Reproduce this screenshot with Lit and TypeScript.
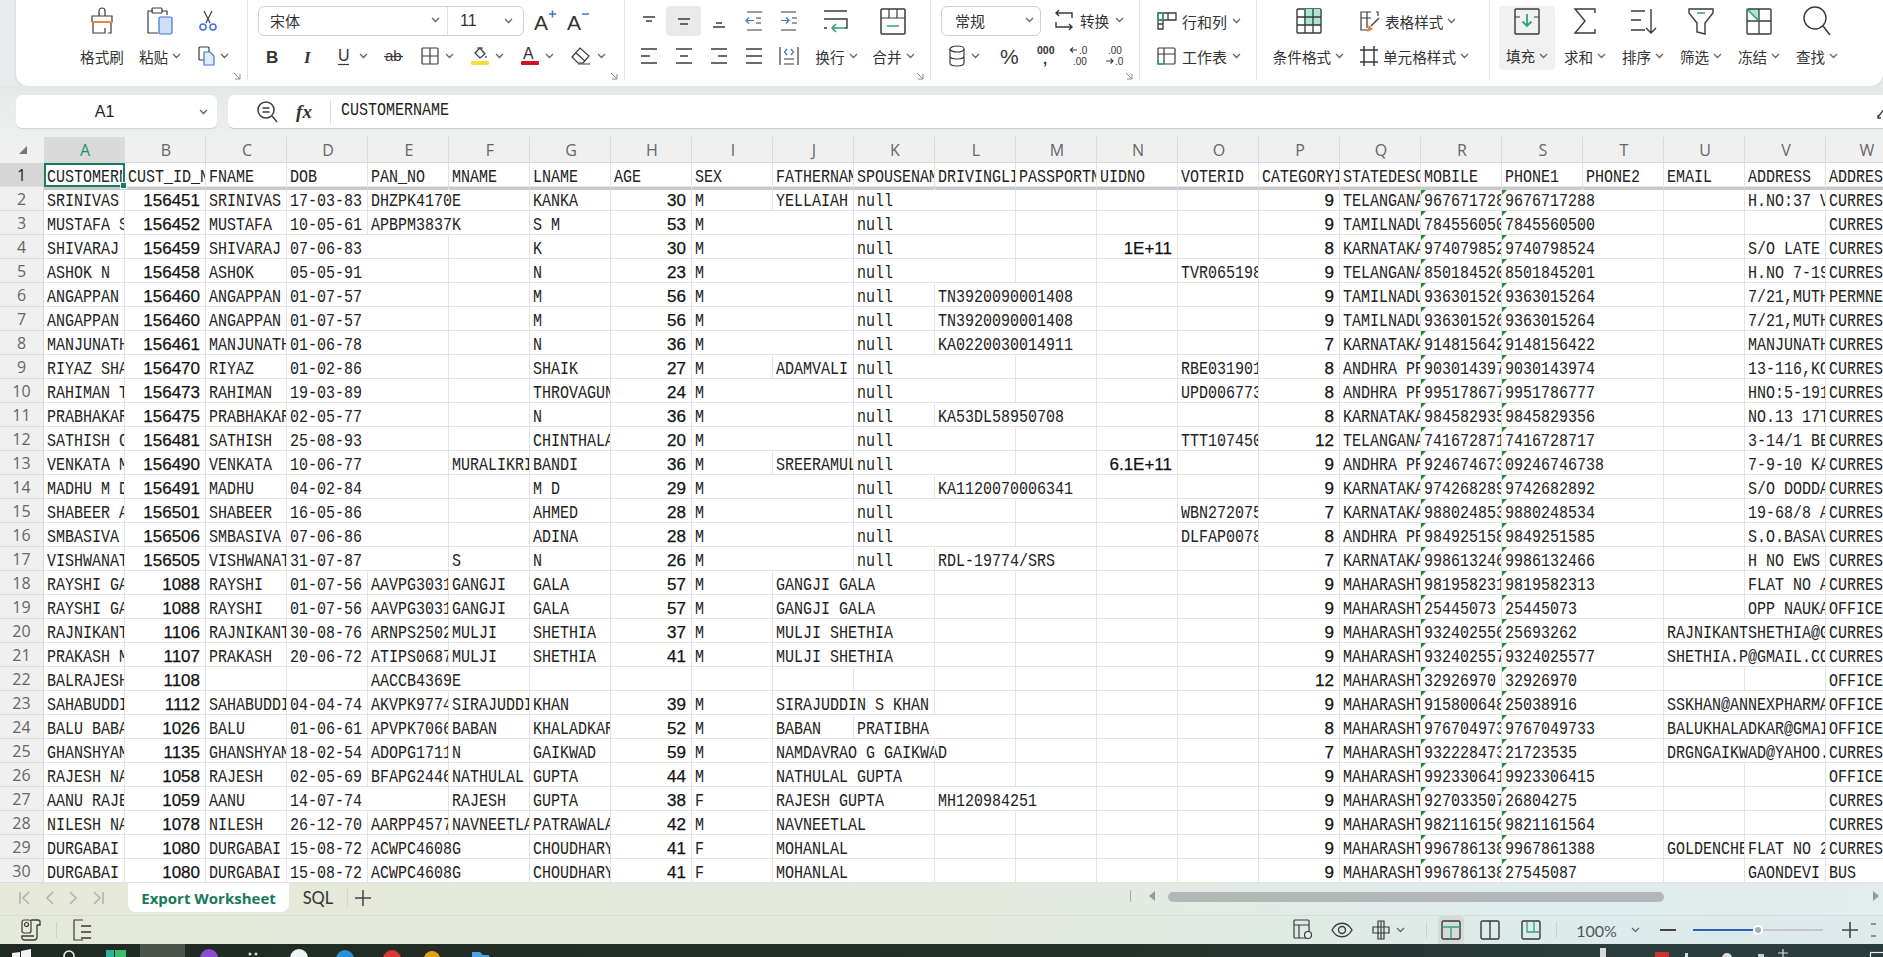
import { LitElement, html, css, svg } from "lit";
import { customElement } from "lit/decorators.js";

const M = "MAHARASHTRA";
const HEAD =
  "CUSTOMERNAME|CUST_ID_NO|FNAME|DOB|PAN_NO|MNAME|LNAME|AGE|SEX|FATHERNAME|SPOUSENAME|DRIVINGLICENSE|PASSPORTNO|UIDNO|VOTERID|CATEGORYID|STATEDESC|MOBILE|PHONE1|PHONE2|EMAIL|ADDRESS|ADDRESSTYPE";
const ROWS = [
  "SRINIVAS|156451|SRINIVAS|17-03-83|DHZPK4170E||KANKA|30|M|YELLAIAH|null|||||9|TELANGANA|9676717288|9676717288|||H.NO:37 VIJAY|CURRESPONDENCE",
  "MUSTAFA S M|156452|MUSTAFA|10-05-61|APBPM3837K||S M|53|M||null|||||9|TAMILNADU|7845560500|7845560500||||CURRESPONDENCE",
  "SHIVARAJ K|156459|SHIVARAJ|07-06-83|||K|30|M||null|||1E+11||8|KARNATAKA|9740798524|9740798524|||S/O LATE K|CURRESPONDENCE",
  "ASHOK N|156458|ASHOK|05-05-91|||N|23|M||null||||TVR0651988|9|TELANGANA|8501845201|8501845201|||H.NO 7-19|CURRESPONDENCE",
  "ANGAPPAN M|156460|ANGAPPAN|01-07-57|||M|56|M||null|TN3920090001408||||9|TAMILNADU|9363015264|9363015264|||7/21,MUTHU|PERMNENT",
  "ANGAPPAN M|156460|ANGAPPAN|01-07-57|||M|56|M||null|TN3920090001408||||9|TAMILNADU|9363015264|9363015264|||7/21,MUTHU|CURRESPONDENCE",
  "MANJUNATH N|156461|MANJUNATH|01-06-78|||N|36|M||null|KA0220030014911||||7|KARNATAKA|9148156422|9148156422|||MANJUNATH|CURRESPONDENCE",
  "RIYAZ SHAIK|156470|RIYAZ|01-02-86|||SHAIK|27|M|ADAMVALI|null||||RBE0319011|8|ANDHRA PRADESH|9030143974|9030143974|||13-116,KOTHA|CURRESPONDENCE",
  "RAHIMAN T|156473|RAHIMAN|19-03-89|||THROVAGUNTA|24|M||null||||UPD0067733|8|ANDHRA PRADESH|9951786777|9951786777|||HNO:5-1911|CURRESPONDENCE",
  "PRABHAKAR N|156475|PRABHAKAR|02-05-77|||N|36|M||null|KA53DL58950708||||8|KARNATAKA|9845829356|9845829356|||NO.13 17TH|CURRESPONDENCE",
  "SATHISH C|156481|SATHISH|25-08-93|||CHINTHALA|20|M||null||||TTT1074500|12|TELANGANA|7416728717|7416728717|||3-14/1 BESIDE|CURRESPONDENCE",
  "VENKATA M|156490|VENKATA|10-06-77||MURALIKRISHNA|BANDI|36|M|SREERAMULU|null|||6.1E+11||9|ANDHRA PRADESH|9246746738|09246746738|||7-9-10 KA|CURRESPONDENCE",
  "MADHU M D|156491|MADHU|04-02-84|||M D|29|M||null|KA1120070006341||||9|KARNATAKA|9742682892|9742682892|||S/O DODDA|CURRESPONDENCE",
  "SHABEER A|156501|SHABEER|16-05-86|||AHMED|28|M||null||||WBN2720755|7|KARNATAKA|9880248534|9880248534|||19-68/8 A|CURRESPONDENCE",
  "SMBASIVA|156506|SMBASIVA|07-06-86|||ADINA|28|M||null||||DLFAP00784|8|ANDHRA PRADESH|9849251585|9849251585|||S.O.BASAVA|CURRESPONDENCE",
  "VISHWANATH|156505|VISHWANATH|31-07-87||S|N|26|M||null|RDL-19774/SRS||||7|KARNATAKA|9986132466|9986132466|||H NO EWS|CURRESPONDENCE",
  `RAYSHI GALA|1088|RAYSHI|01-07-56|AAVPG3031|GANGJI|GALA|57|M|GANGJI GALA||||||9|${M}|9819582313|9819582313|||FLAT NO A|CURRESPONDENCE`,
  `RAYSHI GALA|1088|RAYSHI|01-07-56|AAVPG3031|GANGJI|GALA|57|M|GANGJI GALA||||||9|${M}|25445073|25445073|||OPP NAUKA|OFFICE`,
  `RAJNIKANT|1106|RAJNIKANT|30-08-76|ARNPS2502|MULJI|SHETHIA|37|M|MULJI SHETHIA||||||9|${M}|9324025560|25693262||RAJNIKANTSHETHIA@GMAIL||CURRESPONDENCE`,
  `PRAKASH M|1107|PRAKASH|20-06-72|ATIPS0687|MULJI|SHETHIA|41|M|MULJI SHETHIA||||||9|${M}|9324025577|9324025577||SHETHIA.P@GMAIL.COM||CURRESPONDENCE`,
  `BALRAJESH|1108|||AACCB4369E|||||||||||12|${M}|32926970|32926970||||OFFICE`,
  `SAHABUDDIN|1112|SAHABUDDIN|04-04-74|AKVPK9774|SIRAJUDDIN|KHAN|39|M|SIRAJUDDIN S KHAN||||||9|${M}|9158006488|25038916||SSKHAN@ANNEXPHARMA||OFFICE`,
  `BALU BABAN|1026|BALU|01-06-61|APVPK7066|BABAN|KHALADKAR|52|M|BABAN|PRATIBHA|||||8|${M}|9767049733|9767049733||BALUKHALADKAR@GMAIL||OFFICE`,
  `GHANSHYAM|1135|GHANSHYAM|18-02-54|ADOPG1711|N|GAIKWAD|59|M|NAMDAVRAO G GAIKWAD||||||7|${M}|9322284733|21723535||DRGNGAIKWAD@YAHOO.CO||CURRESPONDENCE`,
  `RAJESH NA|1058|RAJESH|02-05-69|BFAPG2446|NATHULAL|GUPTA|44|M|NATHULAL GUPTA||||||9|${M}|9923306415|9923306415||||OFFICE`,
  `AANU RAJE|1059|AANU|14-07-74||RAJESH|GUPTA|38|F|RAJESH GUPTA||MH120984251||||9|${M}|9270335072|26804275||||CURRESPONDENCE`,
  `NILESH NA|1078|NILESH|26-12-70|AARPP4577|NAVNEETLAL|PATRAWALA|42|M|NAVNEETLAL||||||9|${M}|9821161564|9821161564||||CURRESPONDENCE`,
  `DURGABAI|1080|DURGABAI|15-08-72|ACWPC4608G||CHOUDHARY|41|F|MOHANLAL||||||9|${M}|9967861388|9967861388||GOLDENCHEM|FLAT NO 2|CURRESPONDENCE`,
  `DURGABAI|1080|DURGABAI|15-08-72|ACWPC4608G||CHOUDHARY|41|F|MOHANLAL||||||9|${M}|9967861388|27545087|||GAONDEVI|BUS`,
];
const COLS = "ABCDEFGHIJKLMNOPQRSTUVW".split("");
const NUM_COLS = [1, 7, 13, 15];
const COL_W = 81;

const ic = (w: number, h: number, body: unknown) =>
  html`<svg width=${w} height=${h} viewBox="0 0 ${w} ${h}">${body}</svg>`;

const BLUE = "#3f74d6";
const GREEN = "#2ea37c";

const chev = html`<svg class="chev" width="9" height="6" viewBox="0 0 9 6"><path d="M1 1l3.5 3.5L8 1" /></svg>`;
const launcher = html`<svg class="launch" width="8" height="8" viewBox="0 0 8 8"><path d="M1 1l5.5 5.5M7 2v5H2" /></svg>`;

const I = {
  painter: ic(28, 28, svg`<path d="M11 9V4a3 3 0 0 1 6 0v5"/><path d="M4 9h20v6H4z"/><path d="M4 15h20" stroke="#e8873a" stroke-width="2"/><path d="M5 16v10h12v-5M20 26h3V16"/>`),
  paste: ic(30, 30, svg`<path d="M8 5H3v22h10M17 5h5v4"/><rect x="7" y="2" width="10" height="5" rx="1"/><rect x="14" y="11" width="13" height="17" rx="1.5" fill="#cfdffa" stroke="${BLUE}"/>`),
  cut: ic(20, 22, svg`<path d="M8 13L14 1M12 13L6 1"/><circle cx="5" cy="17" r="3" stroke="${BLUE}" stroke-width="1.6"/><circle cx="15" cy="17" r="3" stroke="${BLUE}" stroke-width="1.6"/>`),
  copy: ic(18, 20, svg`<rect x="1" y="1" width="10" height="13" rx="1"/><path d="M6 6h6l4 4v9H6z" fill="#e3edff" stroke="${BLUE}"/>`),
  aUp: ic(24, 24, svg`<text x="1" y="21" font-size="21" class="g">A</text><path d="M16 5h7M19.500 1.500v7" stroke="${BLUE}" stroke-width="1.500"/>`),
  aDn: ic(24, 24, svg`<text x="1" y="21" font-size="21" class="g">A</text><path d="M16 5h7" stroke="${BLUE}" stroke-width="1.500"/>`),
  b: ic(20, 20, svg`<text x="4" y="17" font-size="17" font-weight="700" class="g">B</text>`),
  i: ic(20, 20, svg`<text x="6" y="17" font-size="17" font-style="italic" font-weight="700" class="g serif">I</text>`),
  u: ic(20, 20, svg`<text x="4" y="15" font-size="16" class="g">U</text><path d="M4 18.500h11"/>`),
  ab: ic(20, 20, svg`<text x="1" y="15" font-size="15" class="g">ab</text><path d="M0 10.500h19"/>`),
  border: ic(20, 20, svg`<rect x="2" y="2" width="16" height="16" rx="1"/><path d="M2 10h16M10 2v16"/>`),
  fill: ic(20, 22, svg`<path d="M5 8l5-5 5 6-5 4z"/><path d="M7 3h6M16 11v2"/><rect x="1" y="16" width="18" height="4" rx="1" fill="#f3e03a" stroke="none"/>`),
  color: ic(20, 22, svg`<text x="3" y="14" font-size="16" class="g">A</text><rect x="1" y="16" width="18" height="4" rx="1" fill="#d6121f" stroke="none"/>`),
  eraser: ic(22, 20, svg`<path d="M2 11l8-9 9 8-6 7H8z"/><path d="M6 7l9 8M8 18h12"/>`),
  vTop: ic(20, 20, svg`<path d="M4 6h12M7 10h6" stroke-width="1.500"/>`),
  vMid: ic(20, 20, svg`<path d="M4 8h12M6 13h8" stroke-width="1.500"/>`),
  vBot: ic(20, 20, svg`<path d="M7 12h6M4 16h12" stroke-width="1.500"/>`),
  outdent: ic(20, 22, svg`<path d="M3 2h15M3 20h15M12 8h5M12 13h5"/><path d="M10 10.500H2M5 7.500l-3 3 3 3" stroke="${BLUE}"/>`),
  indent: ic(20, 22, svg`<path d="M2 2h15M2 20h15M13 8h5M13 13h5"/><path d="M2 10.500h8M7 7.500l3 3-3 3" stroke="${BLUE}"/>`),
  hLeft: ic(20, 20, svg`<path d="M2 3h16M2 10h9M2 17h16" stroke-width="1.400"/>`),
  hMid: ic(20, 20, svg`<path d="M2 3h16M6 10h8M2 17h16" stroke-width="1.400"/>`),
  hRight: ic(20, 20, svg`<path d="M2 3h16M9 10h9M2 17h16" stroke-width="1.400"/>`),
  hJust: ic(20, 20, svg`<path d="M2 3h16M2 10h16M2 17h16" stroke-width="1.400"/>`),
  hDist: ic(22, 22, svg`<path d="M2 2v18M20 2v18M6 14h10M6 19h10"/><path d="M9 4L6.500 7 9 10M13 4l2.500 3L13 10" stroke="${BLUE}"/>`),
  wrap: ic(28, 28, svg`<path d="M2 4h23M2 12h23v9h-2M2 21h3" stroke-width="1.400"/><path d="M24 21H10M14 17l-4 4 4 4" stroke="${GREEN}" stroke-width="1.500"/>`),
  merge: ic(28, 28, svg`<rect x="2" y="2" width="24" height="25" rx="1" stroke-width="1.500"/><path d="M2 11h24M10 2v9M18 2v9"/><path d="M8 19h12" stroke="${GREEN}" stroke-width="1.500"/>`),
  convert: ic(20, 22, svg`<path d="M5 1L2 4l3 3M2 4h16v5M15 21l3-3-3-3M18 18H2v-5" stroke-width="1.400"/>`),
  db: ic(20, 22, svg`<ellipse cx="10" cy="4" rx="7" ry="3"/><path d="M3 4v14c0 4 14 4 14 0V4M3 11c0 4 14 4 14 0"/>`),
  pct: ic(24, 24, svg`<text x="1" y="20" font-size="21" class="g">%</text>`),
  thou: ic(24, 24, svg`<text x="3" y="10" font-size="10.500" font-weight="700" class="g">000</text><text x="9" y="20" font-size="15" font-weight="700" class="g">,</text>`),
  decUp: ic(24, 24, svg`<path d="M8 6H2M4 3.500L1.500 6 4 8.500"/><text x="10" y="10" font-size="10" class="g">.0</text><text x="4" y="21" font-size="10" class="g">.00</text>`),
  decDn: ic(24, 24, svg`<text x="4" y="10" font-size="10" class="g">.00</text><path d="M2 17h7M6.500 14.500L9 17l-2.500 2.500"/><text x="11" y="21" font-size="10" class="g">.0</text>`),
  rowcol: ic(20, 20, svg`<path d="M6 2h13v7H6zM6 9H1v9h5zM1 2h5v7H1zM11 2v7M1 13h5" stroke-width="1.300"/><path d="M1 2h5v7H1z" stroke="${GREEN}"/>`),
  sheet: ic(20, 20, svg`<rect x="1" y="2" width="17" height="16" rx="1"/><path d="M1 8h17M7 2v16"/><path d="M1 14v4h6" stroke="${GREEN}" stroke-width="1.600"/>`),
  cond: ic(28, 30, svg`<rect x="2" y="3" width="24" height="24" rx="1" stroke-width="1.400"/><rect x="9" y="3" width="16" height="17" fill="#a9e6d0" stroke="none"/><path d="M2 11h24M2 19h24M10 3v24M18 3v24" stroke-width="1.300"/>`),
  tableStyle: ic(22, 22, svg`<path d="M12 2H2v18h7M2 8h10M8 2v16M17 2h2v4"/><path d="M20 8l-8 8" stroke="#444" stroke-width="1.500"/><path d="M10 16l3 3-4 2z" fill="#e8873a" stroke="#e8873a"/>`),
  cellStyle: ic(20, 22, svg`<path d="M1 5h18M1 17h18M5 1v20M15 1v20" stroke-width="1.500"/>`),
  fillDown: ic(28, 30, svg`<rect x="2" y="3" width="24" height="25" rx="1" stroke-width="1.400"/><path d="M2 11h5M21 11h5"/><path d="M14 8v12M9.500 15.500L14 20l4.500-4.500" stroke="${GREEN}" stroke-width="1.800"/>`),
  sum: ic(28, 30, svg`<path d="M24 7V3H4l10 12L4 27h20v-4" stroke-width="1.400"/>`),
  sort: ic(28, 30, svg`<path d="M2 5h14M2 14h10M2 24h14M22 3v24M17 22l5 5 5-5" stroke-width="1.400"/>`),
  filter: ic(28, 30, svg`<path d="M2 3h24v4l-8 10v11l-8-2V17L2 7z" stroke-width="1.400"/><path d="M10 7h8" stroke="${GREEN}" stroke-width="1.500"/>`),
  freeze: ic(28, 30, svg`<path d="M2 3h12v14z" fill="#a9e6d0" stroke="none"/><rect x="2" y="3" width="24" height="25" rx="1" stroke-width="1.400"/><path d="M14 3v25M2 15h24" stroke-width="1.300"/><path d="M2 3l12 12" stroke="${GREEN}" stroke-width="1.500"/>`),
  find: ic(30, 32, svg`<circle cx="13" cy="13" r="11" stroke-width="1.400"/><path d="M21 21l7 9" stroke-width="1.500"/>`),
  zoomFx: ic(22, 24, svg`<circle cx="10" cy="10" r="8" stroke-width="1.500"/><path d="M6.500 8h7M6.500 12h7M16 16l5 6" stroke-width="1.400"/>`),
  macro: ic(22, 24, svg`<rect x="2" y="2" width="9" height="13" rx="2"/><circle cx="6.500" cy="6.500" r="2"/><path d="M11 2h7a2 2 0 0 1 2 2v3h-3M17 7v12a3 3 0 0 1-3 3H4a3 3 0 0 1-2-4h12" stroke-width="1.300"/>`),
  outline: ic(22, 24, svg`<path d="M12 2H3v20h9"/><path d="M10 8h10M10 14h10M10 20h10" stroke-width="1.500"/>`),
  pageSet: ic(20, 22, svg`<rect x="1" y="1" width="15" height="18" rx="1"/><path d="M1 6h15M6 6v13"/><circle cx="15" cy="16" r="3.500" fill="#e6ecea"/>`),
  eye: ic(24, 18, svg`<path d="M2 9c5-9 15-9 20 0-5 9-15 9-20 0z" stroke-width="1.400"/><circle cx="12" cy="9" r="3.500" stroke-width="1.400"/>`),
  crossView: ic(20, 22, svg`<path d="M7 2h6v6h5v6h-5v6H7v-6H2V8h5z"/><path d="M7 8h6v6H7zM10 2v18"/>`),
  viewNormal: ic(20, 22, svg`<rect x="1" y="2" width="18" height="18" rx="1.500" stroke-width="1.400"/><path d="M1 8h18M10 8v12" stroke="${GREEN}" stroke-width="1.400"/>`),
  viewPage: ic(20, 22, svg`<rect x="1" y="2" width="18" height="18" rx="1.500" stroke-width="1.400"/><path d="M10 2v18" stroke-width="1.400"/>`),
  viewBreak: ic(20, 22, svg`<rect x="1" y="2" width="18" height="18" rx="1.500" stroke-width="1.400"/><path d="M6 3v10h13M13 3v10" stroke="${GREEN}" stroke-width="1.300"/>`),
  expand: ic(9, 16, svg`<path d="M1 13l7-9M4 14H1v-3M6 2h3" stroke-width="1.300"/>`),
};

@customElement("app-root")
export class AppRoot extends LitElement {
  static styles = css`
    :host {
      display: block;
      width: 1883px;
      height: 957px;
      overflow: hidden;
      font-family: "Noto Sans CJK SC", "Noto Sans", sans-serif;
      color: #333;
      background: #e8ecec;
    }

    svg {
      display: block;
      flex: none;
      fill: none;
      stroke: #3a3a3a;
      stroke-width: 1.2;
    }
    svg .g {
      fill: #333;
      stroke: none;
      font-family: "Liberation Sans", sans-serif;
    }
    svg .serif {
      font-family: "Liberation Serif", serif;
    }
    .chev {
      stroke: #666;
      stroke-width: 1.3;
    }
    .launch {
      position: absolute;
      right: 6px;
      bottom: 0;
      stroke: #888;
      stroke-width: 1;
    }

    /* ribbon */
    .ribbon {
      display: flex;
      height: 86px;
      margin-left: 16px;
      background: #fff;
      border-radius: 0 0 12px 12px;
      box-shadow: 0 1px 3px rgba(0, 0, 0, 0.12);
      font-size: 14.6px;
      white-space: nowrap;
    }
    .group {
      position: relative;
      flex: none;
      box-sizing: border-box;
      height: 80px;
      padding-top: 6px;
      border-right: 1px solid #e2e2e2;
    }
    .grid {
      display: grid;
      grid-auto-flow: column;
      grid-template-rows: 30px 30px;
      row-gap: 5px;
      justify-content: start;
    }
    .grid > * {
      display: flex;
      align-items: center;
      justify-content: center;
      gap: 4px;
    }
    .big {
      grid-row: span 2;
      flex-direction: column;
      gap: 5px !important;
      border-radius: 4px;
    }
    .big > * {
      height: 30px;
      display: flex;
      align-items: center;
      gap: 4px;
    }
    .lead {
      justify-content: flex-start !important;
    }
    .on {
      background: #e9e9e9;
      border-radius: 4px;
    }
    .big.on {
      background: #f1f1f1;
      height: 64px;
      margin: 0 1px;
    }
    .stack {
      display: flex;
      flex-direction: column;
      gap: 5px;
    }
    .line {
      display: flex;
      align-items: center;
      height: 30px;
    }
    .t {
      display: flex;
      align-items: center;
      gap: 5px;
    }

    .g1 {
      width: 232px;
    }
    .g1 .grid {
      grid-template-columns: 58px 58px 48px;
      padding-left: 57px;
    }
    .g1 .lead {
      padding-left: 9px;
    }
    .g2 {
      width: 377px;
    }
    .g2 .top {
      padding-left: 10px;
      gap: 9px;
    }
    .g2 .bottom {
      padding-left: 14px;
      gap: 16px;
    }
    .fontbox {
      display: flex;
      align-items: center;
      box-sizing: border-box;
      width: 266px;
      height: 30px;
      border: 1px solid #d0d0d0;
      border-radius: 6px;
      font-size: 15px;
    }
    .fontname {
      display: flex;
      align-items: center;
      justify-content: space-between;
      box-sizing: border-box;
      width: 189px;
      height: 100%;
      padding: 0 7px 2px 11px;
      border-right: 1px solid #e0e0e0;
    }
    .fontsize {
      display: flex;
      align-items: center;
      justify-content: space-between;
      flex: 1;
      padding: 0 10px 0 12px;
      font-family: "Liberation Sans", sans-serif;
      font-size: 16px;
    }
    .g3 {
      width: 306px;
    }
    .g3 .grid {
      grid-template-columns: repeat(5, 35.2px) 59px 55px;
      padding-left: 6px;
    }
    .g4 {
      width: 209px;
    }
    .g4 .top {
      padding-left: 10px;
      gap: 13px;
    }
    .g4 .bottom {
      padding-left: 16px;
      gap: 11px;
    }
    .numfmt {
      display: flex;
      align-items: center;
      justify-content: space-between;
      box-sizing: border-box;
      width: 100px;
      height: 30px;
      padding: 0 6px 2px 13px;
      border: 1px solid #d0d0d0;
      border-radius: 6px;
      font-size: 15px;
    }
    .g4 .conv {
      gap: 6px;
      padding-bottom: 2px;
    }
    .g4 .db {
      margin-right: 8px;
      gap: 4px;
    }
    .g5 {
      width: 117px;
    }
    .g5 .stack {
      padding-left: 17px;
      font-size: 15px;
    }
    .g5 .t {
      gap: 5px;
    }
    .g6 {
      width: 233px;
    }
    .g6 .grid {
      grid-template-columns: 83px 130px;
      column-gap: 9px;
      padding-left: 10px;
    }
    .g6 .lead {
      gap: 4px;
    }
    .g7 {
      width: 390px;
      border-right: none;
    }
    .g7 .grid {
      grid-template-columns: repeat(6, 58px);
      padding-left: 8px;
    }

    /* formula bar */
    .formula {
      display: flex;
      gap: 11px;
      height: 33px;
      padding: 9px 0 9px 16px;
      background: linear-gradient(#e4e9e8, #eef0f0);
    }
    .namebox {
      display: flex;
      align-items: center;
      box-sizing: border-box;
      width: 201px;
      padding: 0 9px 0 0;
      background: #fff;
      border-radius: 6px;
      font-family: "Liberation Sans", sans-serif;
      font-size: 16px;
      box-shadow: 0 1px 1px rgba(0, 0, 0, 0.12);
    }
    .namebox span {
      flex: 1;
      text-align: center;
      margin-right: 6px;
      color: #222;
    }
    .fbox {
      display: flex;
      align-items: center;
      flex: 1;
      background: #fff;
      border-radius: 6px 0 0 6px;
      box-shadow: 0 1px 1px rgba(0, 0, 0, 0.16);
    }
    .fbox .zoom {
      margin-left: 28px;
    }
    .fx {
      width: 52px;
      text-align: center;
      font: italic 700 19px "Liberation Serif", serif;
      color: #333;
    }
    .fbox .val {
      height: 24px;
      padding-left: 10px;
      border-left: 1px solid #ddd;
      line-height: 17px;
      flex: 1;
    }
    .fbox .more {
      margin-right: -3px;
    }

    /* sheet */
    .sheet {
      display: grid;
      grid-template-columns: 44px repeat(23, 81px);
      grid-template-rows: 26px repeat(30, 24px);
      height: 746px;
      overflow: hidden;
      background: #fff;
    }
    .corner,
    .ch,
    .rh {
      display: flex;
      align-items: center;
      justify-content: center;
      box-sizing: border-box;
      background: #f0f0f0;
      color: #666;
      font-family: "Open Sans", sans-serif;
      font-size: 16px;
    }
    .corner {
      padding-left: 2px;
    }
    .corner svg {
      fill: #777;
      stroke: none;
    }
    .ch {
      padding-left: 2px;
      border-right: 1px solid #dcdcdc;
      border-bottom: 1px solid #d8d8d8;
    }
    .ch.active {
      background: #dadada;
      color: #1a8f66;
    }
    .rh {
      border-bottom: 1px solid #dcdcdc;
      border-right: 1px solid #d8d8d8;
    }
    .rh.active {
      background: #d6d6d6;
      color: #222;
    }
    .c {
      position: relative;
      box-sizing: border-box;
      height: 24px;
      overflow: hidden;
      padding-left: 3px;
      border-right: 1px solid #e3e3e3;
      border-bottom: 1px solid #e3e3e3;
      line-height: 24px;
      white-space: pre;
    }
    .c.spill {
      overflow: visible;
      border-right-color: transparent;
    }
    .c.frozen {
      border-top: 3px solid #c9c9c9;
      line-height: 18px;
    }
    .c.num {
      padding: 0 5px 0 0;
      text-align: right;
      font: 17px/27px "Liberation Sans", sans-serif;
      color: #111;
      -webkit-text-stroke: 0.25px #111;
    }
    .c.frozen.num {
      line-height: 21px;
    }
    .c.flag::before {
      content: "";
      position: absolute;
      left: 0;
      top: 0;
      border-top: 5px solid #1f8f33;
      border-right: 5px solid transparent;
    }
    .c.sel {
      overflow: visible;
      outline: 2px solid #12805c;
      outline-offset: -2px;
      z-index: 2;
      clip-path: inset(0 -3px -3px 0);
    }
    .clip {
      display: block;
      overflow: hidden;
    }
    .sel .clip {
      width: 75px;
    }
    .c.sel::after {
      content: "";
      position: absolute;
      right: -3px;
      bottom: -3px;
      width: 5px;
      height: 5px;
      background: #12805c;
      border: 1px solid #fff;
    }
    .tx {
      display: inline-block;
      font: 18px "Liberation Mono", "Noto Sans CJK SC", monospace;
      line-height: inherit;
      color: #222;
      transform: scaleX(0.833);
      transform-origin: left center;
    }

    /* sheet tabs */
    .tabs {
      display: flex;
      height: 32px;
      background: linear-gradient(90deg, #e6e9d9 0%, #e4e9dc 50%, #dfeced 80%, #e1ecec 100%);
      font-size: 16px;
    }
    .nav {
      display: flex;
      box-sizing: border-box;
      align-items: center;
      width: 128px;
      height: 29px;
      padding-left: 18px;
      gap: 15px;
    }
    .nav svg {
      stroke: #b3b3b3;
      stroke-width: 1.6;
    }
    .tab {
      display: flex;
      align-items: center;
      justify-content: center;
      height: 29px;
      font-family: "Open Sans", sans-serif;
    }
    .tab.cur {
      width: 161px;
      background: #fff;
      border-radius: 0 0 8px 8px;
      color: #197a58;
      font-weight: 700;
      font-size: 15px;
    }
    .tab.sql {
      width: 58px;
      color: #333;
      font-family: "Lato", sans-serif;
      font-size: 16.5px;
    }
    .tabsep {
      width: 1px;
      height: 20px;
      margin-top: 5px;
      background: #d4d6ca;
    }
    .plus {
      display: flex;
      align-items: center;
      height: 29px;
      margin-left: 6px;
    }
    .plus svg {
      stroke: #444;
      stroke-width: 1.5;
    }
    .hs {
      display: flex;
      align-items: center;
      gap: 14px;
      height: 26px;
      margin-left: auto;
      width: 753px;
      box-sizing: border-box;
      padding-right: 4px;
    }
    .hs .tick {
      width: 1px;
      height: 12px;
      background: #aaa;
    }
    .tri {
      width: 0;
      height: 0;
      border-top: 5px solid transparent;
      border-bottom: 5px solid transparent;
    }
    .tri.l {
      margin-left: 4px;
      border-right: 6px solid #999;
    }
    .tri.r {
      border-left: 6px solid #999;
    }
    .track {
      flex: 1;
      margin-left: -1px;
    }
    .thumb {
      width: 496px;
      height: 10px;
      margin-top: 1px;
      background: #b2b7b8;
      border-radius: 5px;
    }

    /* status bar */
    .status {
      display: flex;
      justify-content: space-between;
      box-sizing: border-box;
      height: 29px;
      border-top: 1px solid #d9dcd4;
      background: linear-gradient(90deg, #e5e9da 0%, #e4e9dd 50%, #dcebeb 85%, #dee9ea 100%);
    }
    .sl {
      display: flex;
      align-items: center;
      padding-left: 20px;
      gap: 14px;
    }
    .vsep {
      width: 1px;
      height: 16px;
      background: #cfd2c8;
    }
    .sr {
      display: grid;
      grid-template-columns: 39px 40px 52px 24px 26px 52px 30px 20px 84px 36px 144px 40px 13px;
      align-items: stretch;
    }
    .sr > * {
      display: flex;
      align-items: center;
      justify-content: center;
      gap: 5px;
    }
    .sr .view-on {
      background: #d4dbd9;
      border-radius: 4px 4px 0 0;
    }
    .pct {
      gap: 14px !important;
      font-family: "Lato", sans-serif;
      font-size: 16px;
      color: #555;
    }
    .hbar {
      width: 16px;
      height: 2px;
      background: #444;
    }
    .cross {
      stroke: #444;
      stroke-width: 1.6;
    }
    .slider {
      position: relative;
      width: 130px;
      height: 2px;
      background: #c2c6c6;
    }
    .slider .fill {
      width: 50%;
      height: 2px;
      background: #2a5fc4;
    }
    .slider .knob {
      position: absolute;
      left: 60px;
      top: -4px;
      box-sizing: border-box;
      width: 10px;
      height: 10px;
      border-radius: 50%;
      border: 2px solid #fff;
      background: #a5abb0;
    }
    .full {
      overflow: hidden;
      justify-content: flex-start !important;
    }

    .taskbar {
      height: 13px;
      overflow: hidden;
    }
    .taskbar svg {
      stroke: none;
    }
  `;

  private ribbon() {
    const big = (icon: unknown, label: string, on = false) =>
      html`<div class="big ${on ? "on" : ""}">
        <div>${icon}</div>
        <div>${label}${chev}</div>
      </div>`;
    return html`<div class="ribbon">
      <div class="group g1">
        <div class="grid">
          <div class="big"><div>${I.painter}</div><div>格式刷</div></div>
          ${big(I.paste, "粘贴")}
          <div class="lead">${I.cut}</div>
          <div class="lead">${I.copy}${chev}</div>
        </div>
        ${launcher}
      </div>
      <div class="group g2">
        <div class="stack">
          <div class="line top">
            <div class="fontbox">
              <div class="fontname">宋体${chev}</div>
              <div class="fontsize">11${chev}</div>
            </div>
            ${I.aUp}${I.aDn}
          </div>
          <div class="line bottom">
            ${I.b}${I.i}
            <div class="t">${I.u}${chev}</div>
            ${I.ab}
            <div class="t">${I.border}${chev}</div>
            <div class="t">${I.fill}${chev}</div>
            <div class="t">${I.color}${chev}</div>
            <div class="t">${I.eraser}${chev}</div>
          </div>
        </div>
        ${launcher}
      </div>
      <div class="group g3">
        <div class="grid">
          <div>${I.vTop}</div>
          <div>${I.hLeft}</div>
          <div class="on">${I.vMid}</div>
          <div>${I.hMid}</div>
          <div>${I.vBot}</div>
          <div>${I.hRight}</div>
          <div>${I.outdent}</div>
          <div>${I.hJust}</div>
          <div>${I.indent}</div>
          <div>${I.hDist}</div>
          ${big(I.wrap, "换行")} ${big(I.merge, "合并")}
        </div>
        ${launcher}
      </div>
      <div class="group g4">
        <div class="stack">
          <div class="line top">
            <div class="numfmt">常规${chev}</div>
            <div class="t conv">${I.convert}转换${chev}</div>
          </div>
          <div class="line bottom">
            <div class="t db">${I.db}${chev}</div>
            ${I.pct}${I.thou}${I.decUp}${I.decDn}
          </div>
        </div>
        ${launcher}
      </div>
      <div class="group g5">
        <div class="stack">
          <div class="line t">${I.rowcol}行和列${chev}</div>
          <div class="line t">${I.sheet}工作表${chev}</div>
        </div>
      </div>
      <div class="group g6">
        <div class="grid">
          ${big(I.cond, "条件格式")}
          <div class="lead">${I.tableStyle}表格样式${chev}</div>
          <div class="lead">${I.cellStyle}单元格样式${chev}</div>
        </div>
      </div>
      <div class="group g7">
        <div class="grid">
          ${big(I.fillDown, "填充", true)} ${big(I.sum, "求和")} ${big(I.sort, "排序")}
          ${big(I.filter, "筛选")} ${big(I.freeze, "冻结")} ${big(I.find, "查找")}
        </div>
      </div>
    </div>`;
  }

  private formula() {
    return html`<div class="formula">
      <div class="namebox"><span>A1</span>${chev}</div>
      <div class="fbox">
        <div class="zoom">${I.zoomFx}</div>
        <div class="fx">fx</div>
        <div class="val"><span class="tx">CUSTOMERNAME</span></div>
        <div class="more">${I.expand}</div>
      </div>
    </div>`;
  }

  private cell(row: string[], c: number, r: number) {
    const v = row[c] ?? "";
    const num = NUM_COLS.includes(c) && r > 0 && v !== "";
    const spill = v !== "" && !num && c < 22 && !row[c + 1];
    const sel = r === 0 && c === 0;
    const cls = [
      "c",
      num ? "num" : "",
      spill ? "spill" : "",
      r === 1 ? "frozen" : "",
      r > 0 && v && (c === 17 || c === 18) ? "flag" : "",
      sel ? "sel" : "",
    ].join(" ");
    if (sel) return html`<div class=${cls}><span class="clip"><span class="tx">${v}</span></span></div>`;
    if (num) return html`<div class=${cls}>${v}</div>`;
    if (spill) {
      // a long text runs over empty neighbours and stops at the next filled cell
      let free = 1;
      while (c + free < 23 && !row[c + free]) free++;
      // one line only: .c keeps white-space: pre
      return html`<div class=${cls}><span class="clip" style="width:${free * COL_W - 4}px"><span class="tx">${v}</span></span></div>`;
    }
    return html`<div class=${cls}>${v ? html`<span class="tx">${v}</span>` : ""}</div>`;
  }

  private sheet() {
    const rows = [HEAD, ...ROWS].map((s) => s.split("|"));
    return html`<div class="sheet">
      <div class="corner"><svg width="10" height="10" viewBox="0 0 10 10"><path d="M9 1v8H1z" /></svg></div>
      ${COLS.map((l, i) => html`<div class="ch ${i === 0 ? "active" : ""}">${l}</div>`)}
      ${rows.map(
        (row, r) => html`<div class="rh ${r === 0 ? "active" : ""}">${r + 1}</div>
          ${COLS.map((_, c) => this.cell(row, c, r))}`
      )}
    </div>`;
  }

  private tabs() {
    return html`<div class="tabs">
      <div class="nav">
        <svg width="12" height="16" viewBox="0 0 12 16"><path d="M2 2v12M11 2L5 8l6 6" /></svg>
        <svg width="9" height="16" viewBox="0 0 9 16"><path d="M8 2L2 8l6 6" /></svg>
        <svg width="9" height="16" viewBox="0 0 9 16"><path d="M1 2l6 6-6 6" /></svg>
        <svg width="12" height="16" viewBox="0 0 12 16"><path d="M1 2l6 6-6 6M10 2v12" /></svg>
      </div>
      <div class="tab cur">Export Worksheet</div>
      <div class="tab sql">SQL</div>
      <div class="tabsep"></div>
      <div class="plus"><svg width="18" height="18" viewBox="0 0 18 18"><path d="M9 1v16M1 9h16" /></svg></div>
      <div class="hs">
        <div class="tick"></div>
        <div class="tri l"></div>
        <div class="track"><div class="thumb"></div></div>
        <div class="tri r"></div>
      </div>
    </div>`;
  }

  private status() {
    return html`<div class="status">
      <div class="sl">${I.macro}<div class="vsep"></div>${I.outline}</div>
      <div class="sr">
        <div>${I.pageSet}</div>
        <div>${I.eye}</div>
        <div>${I.crossView}${chev}</div>
        <div><div class="vsep"></div></div>
        <div class="view-on">${I.viewNormal}</div>
        <div>${I.viewPage}</div>
        <div>${I.viewBreak}</div>
        <div><div class="vsep"></div></div>
        <div class="pct">100%${chev}</div>
        <div><div class="hbar"></div></div>
        <div>
          <div class="slider"><div class="fill"></div><div class="knob"></div></div>
        </div>
        <div><svg class="cross" width="18" height="18" viewBox="0 0 18 18"><path d="M9 1v16M1 9h16" /></svg></div>
        <div class="full"><svg width="12" height="18" viewBox="0 0 12 18"><path d="M1 3h5M1 15h5" /></svg></div>
      </div>
    </div>`;
  }

  private taskbar() {
    return html`<div class="taskbar">
      <svg width="1883" height="13" viewBox="0 0 1883 13">
        <defs>
          <linearGradient id="tb" x1="0" x2="1" y1="0" y2="0">
            <stop offset="0" stop-color="#1e2a23" />
            <stop offset="0.6" stop-color="#253029" />
            <stop offset="0.9" stop-color="#2c3f3f" />
            <stop offset="1" stop-color="#2a3b3b" />
          </linearGradient>
        </defs>
        <rect width="1883" height="13" fill="url(#tb)" />
        <rect x="140" width="45" height="13" fill="#4b534b" />
        <path d="M12 9l8-1v5h-8zM21 7l10-2v8H21z" fill="#f2f2f2" />
        <circle cx="69" cy="12" r="5" fill="none" stroke="#eee" stroke-width="1.6" />
        <path d="M106 6h8v7h-8z" fill="#2bb3a0" /><path d="M115 6h11v7h-11z" fill="#39c06b" />
        <circle cx="209" cy="14" r="9" fill="#8a4fd0" />
        <circle cx="250" cy="10" r="1.500" fill="#ddd" /><circle cx="256" cy="10" r="1.500" fill="#ddd" />
        <circle cx="299" cy="14" r="9" fill="#eef3f8" />
        <circle cx="345" cy="15" r="9" fill="#2f8fd0" />
        <circle cx="392" cy="15" r="9" fill="#d93a32" />
        <circle cx="432" cy="15" r="8" fill="#e0a020" />
        <path d="M472 8h8l3 3h6v2h-17z" fill="#4aa3e0" />
        <rect x="1600" y="4" width="6" height="9" fill="#d8d8d8" />
        <rect x="1655" y="8" width="14" height="5" fill="#c7352c" />
        <rect x="1685" y="9" width="3" height="4" fill="#ddd" />
        <circle cx="1727" cy="14" r="5" fill="#ddd" />
        <rect x="1758" y="10" width="6" height="3" fill="#ccc" />
        <path d="M1783 5v8M1778 9h10" stroke="#ddd" stroke-width="1.200" />
        <rect x="1870.500" y="8.500" width="14" height="8" fill="none" stroke="#eee" />
      </svg>
    </div>`;
  }

  render() {
    return html`${this.ribbon()}${this.formula()}${this.sheet()}${this.tabs()}${this.status()}${this.taskbar()}`;
  }
}
